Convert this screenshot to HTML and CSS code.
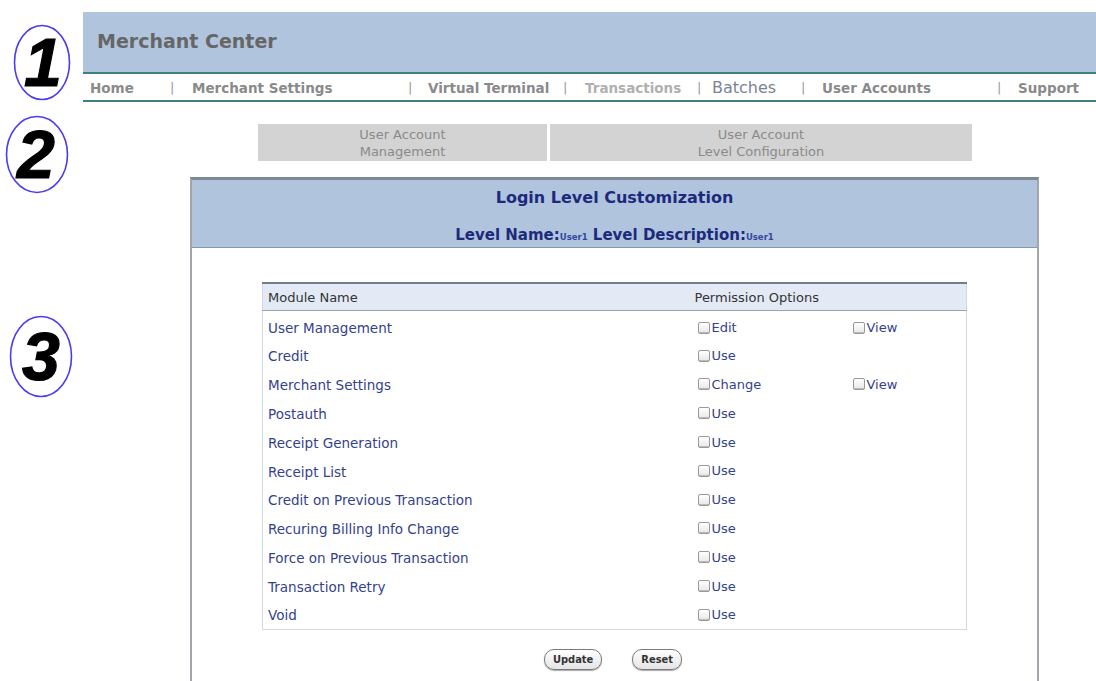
FILE: index.html
```html
<!DOCTYPE html>
<html lang="en">
<head>
<meta charset="utf-8">
<title>Merchant Center - Login Level Customization</title>
<link rel="stylesheet" href="styles.css">
</head>
<body>
<div class="page">
  <svg class="callout callout-1" viewBox="0 0 58 77" aria-hidden="true">
    <ellipse cx="29" cy="38.5" rx="27.5" ry="37" />
    <text x="30" y="62">1</text>
  </svg>
  <svg class="callout callout-2" viewBox="0 0 64 79" aria-hidden="true">
    <ellipse cx="32" cy="39.5" rx="30.5" ry="38" />
    <text x="31" y="63">2</text>
  </svg>
  <svg class="callout callout-3" viewBox="0 0 64 83" aria-hidden="true">
    <ellipse cx="32" cy="41.5" rx="30.5" ry="40" />
    <text x="32" y="65">3</text>
  </svg>

  <header class="masthead">Merchant Center</header>

  <nav class="mainnav">
    <a class="nav-item">Home</a><span class="sep">|</span>
    <a class="nav-item">Merchant Settings</a><span class="sep">|</span>
    <a class="nav-item">Virtual Terminal</a><span class="sep">|</span>
    <a class="nav-item nav-faint">Transactions</a><span class="sep">|</span>
    <a class="nav-item nav-plain">Batches</a><span class="sep">|</span>
    <a class="nav-item">User Accounts</a><span class="sep">|</span>
    <a class="nav-item">Support</a>
  </nav>

  <div class="tabs">
    <div class="tab tab-narrow">User Account<br>Management</div>
    <div class="tab tab-wide">User Account<br>Level Configuration</div>
  </div>

  <section class="panel">
    <div class="panel-head">
      <h1 class="panel-title">Login Level Customization</h1>
      <p class="panel-sub">Level Name:<span class="val">User1</span> Level Description:<span class="val">User1</span></p>
    </div>

    <div class="panel-body">
      <table class="perm-table">
        <thead>
          <tr>
            <th class="col-name">Module Name</th>
            <th class="col-perm" colspan="2">Permission Options</th>
          </tr>
        </thead>
        <tbody>
          <tr><td>User Management</td><td class="opt"><label><span class="box"></span>Edit</label></td><td class="opt"><label><span class="box"></span>View</label></td></tr>
          <tr><td>Credit</td><td class="opt"><label><span class="box"></span>Use</label></td><td></td></tr>
          <tr><td>Merchant Settings</td><td class="opt"><label><span class="box"></span>Change</label></td><td class="opt"><label><span class="box"></span>View</label></td></tr>
          <tr><td>Postauth</td><td class="opt"><label><span class="box"></span>Use</label></td><td></td></tr>
          <tr><td>Receipt Generation</td><td class="opt"><label><span class="box"></span>Use</label></td><td></td></tr>
          <tr><td>Receipt List</td><td class="opt"><label><span class="box"></span>Use</label></td><td></td></tr>
          <tr><td>Credit on Previous Transaction</td><td class="opt"><label><span class="box"></span>Use</label></td><td></td></tr>
          <tr><td>Recuring Billing Info Change</td><td class="opt"><label><span class="box"></span>Use</label></td><td></td></tr>
          <tr><td>Force on Previous Transaction</td><td class="opt"><label><span class="box"></span>Use</label></td><td></td></tr>
          <tr><td>Transaction Retry</td><td class="opt"><label><span class="box"></span>Use</label></td><td></td></tr>
          <tr><td>Void</td><td class="opt"><label><span class="box"></span>Use</label></td><td></td></tr>
        </tbody>
      </table>

      <div class="actions">
        <button class="btn" type="button">Update</button>
        <button class="btn" type="button">Reset</button>
      </div>
    </div>
  </section>
</div>
</body>
</html>
```

FILE: styles.css
```css
* { box-sizing: border-box; }

html, body {
  margin: 0;
  padding: 0;
  background: #fff;
  height: 681px;
  overflow: hidden;
}

body {
  font-family: "DejaVu Sans", Verdana, sans-serif;
  color: #333;
}

.page {
  position: relative;
  padding: 12px 0 0 83px;
}

/* numbered callout marks in the left margin */
.callout {
  position: absolute;
  overflow: visible;
}
.callout ellipse {
  fill: none;
  stroke: #4a3cf0;
  stroke-width: 1.6;
}
.callout text {
  font-family: "Liberation Sans", Arial, sans-serif;
  font-weight: bold;
  font-style: italic;
  font-size: 68px;
  text-anchor: middle;
  fill: #000;
  stroke: #000;
  stroke-width: 1.2;
}
.callout-1 { left: 13px; top: 24px; width: 58px; height: 77px; }
.callout-2 { left: 5px;  top: 115px; width: 64px; height: 79px; }
.callout-3 { left: 9px;  top: 315px; width: 64px; height: 83px; }

/* top banner */
.masthead {
  height: 62px;
  background: #b0c4de;
  border-bottom: 2px solid #3e7f80;
  padding: 18px 0 0 14px;
  font-size: 19px;
  font-weight: bold;
  color: #666;
}

.mainnav {
  display: grid;
  grid-template-columns: 7px 80px 22px 216px 20px 135px 22px 112px 15px 89px 21px 175px 21px 1fr;
  align-items: center;
  height: 28px;
  padding-top: 1px;
  border-bottom: 2px solid #3e7f80;
  font-size: 13.5px;
  font-weight: bold;
  color: #8a8a8a;
  white-space: nowrap;
}
.mainnav::before { content: ""; }
.nav-item { color: #8a8a8a; }
.nav-faint { color: #b0b0b0; }
.nav-plain {
  font-weight: normal;
  font-size: 16px;
  color: #7b8591;
}
.sep {
  font-weight: normal;
  color: #999;
  font-size: 13px;
}

/* section tabs */
.tabs {
  display: flex;
  gap: 3px;
  margin: 22px 0 0 175px;
}
.tab {
  height: 37px;
  background: #d3d3d3;
  color: #8a8a8a;
  font-size: 13px;
  line-height: 17px;
  text-align: center;
  padding-top: 2px;
}
.tab-narrow { width: 289px; }
.tab-wide { width: 422px; }

/* main panel */
.panel {
  margin: 16px 0 0 107px;
  width: 849px;
  height: 520px;
  border-top: 3px solid #7d8893;
  border-left: 2px solid #a2a6aa;
  border-right: 2px solid #a2a6aa;
}
.panel-head {
  height: 68px;
  background: #b0c4de;
  border-bottom: 1px solid #8b97a3;
  text-align: center;
  color: #1d2a7c;
  padding-top: 7px;
}
.panel-title {
  margin: 0;
  font-size: 16px;
  font-weight: bold;
  line-height: 22px;
}
.panel-sub {
  margin: 15px 0 0;
  font-size: 15px;
  font-weight: bold;
  line-height: 22px;
}
.panel-sub .val {
  font-size: 8.5px;
  font-weight: bold;
  color: #3447a0;
}

.panel-body {
  padding-top: 34px;
}

.perm-table {
  width: 705px;
  margin: 0 auto;
  border-collapse: collapse;
  border: 1px solid #d3d9e2;
  border-top: 2px solid #757d86;
  font-size: 13.5px;
  color: #34428c;
}
.perm-table th {
  height: 27px;
  background: #e3eaf6;
  border-bottom: 1px solid #98a5b6;
  font-weight: normal;
  font-size: 13px;
  color: #333;
  text-align: left;
  padding: 1px 0 0 5px;
}
.perm-table th.col-perm { padding-left: 2px; }
.perm-table tbody tr:first-child td { height: 32px; padding-top: 4px; }
.perm-table td {
  height: 28.8px;
  padding: 0 0 0 5px;
  vertical-align: middle;
  white-space: nowrap;
}
.perm-table td:first-child { width: 430px; }
.perm-table td.opt { width: 155px; }
.perm-table td.opt:last-child { width: auto; }

.opt label {
  display: inline-flex;
  align-items: center;
  gap: 2px;
  color: #34428c;
  font-size: 13px;
}
.box {
  display: inline-block;
  width: 12px;
  height: 12px;
  border: 1px solid #9a9a9a;
  border-radius: 2px;
  background: linear-gradient(#fff, #e8e8e8);
  box-shadow: inset 0 -1px 0 #bbb;
}

.actions {
  display: flex;
  justify-content: center;
  gap: 30px;
  margin-top: 19px;
  padding-right: 3px;
}
.btn {
  height: 21px;
  padding: 0 8px;
  border: 1px solid #7a7a7a;
  border-radius: 10px;
  background: linear-gradient(#ffffff, #e4e4e4);
  box-shadow: 0 1px 1px #aaa;
  font-family: "Liberation Sans Narrow", "DejaVu Sans Condensed", sans-serif;
  font-weight: bold;
  font-size: 11px;
  color: #333;
}
```
